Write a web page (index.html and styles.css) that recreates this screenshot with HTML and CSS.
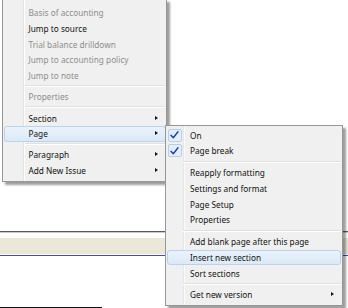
FILE: index.html
```html
<!DOCTYPE html>
<html>
<head>
<meta charset="utf-8">
<link rel="stylesheet" href="styles.css">
</head>
<body>
<div class="doc">
  <div class="rule-dark"></div>
  <div class="band"></div>
  <div class="rule-blue"></div>
  <div class="rule-black"></div>
</div>

<div class="menu main-menu">
  <div class="item disabled">Basis of accounting</div>
  <div class="item">Jump to source</div>
  <div class="item disabled">Trial balance drilldown</div>
  <div class="item disabled">Jump to accounting policy</div>
  <div class="item disabled">Jump to note</div>
  <div class="sep"></div>
  <div class="item disabled">Properties</div>
  <div class="sep"></div>
  <div class="item sub">Section<span class="arrow"></span></div>
  <div class="item sub hot">Page<span class="arrow"></span></div>
  <div class="sep"></div>
  <div class="item sub">Paragraph<span class="arrow"></span></div>
  <div class="item sub">Add New Issue<span class="arrow"></span></div>
</div>

<div class="menu sub-menu">
  <div class="item checked"><span class="check"><svg width="9" height="8" viewBox="0 0 9 8"><path d="M1 4.2 L3.3 6.8 L8 0.8" fill="none" stroke="#1d3fa8" stroke-width="1.4" stroke-linecap="round" stroke-linejoin="round"/></svg></span>On</div>
  <div class="item checked"><span class="check"><svg width="9" height="8" viewBox="0 0 9 8"><path d="M1 4.2 L3.3 6.8 L8 0.8" fill="none" stroke="#1d3fa8" stroke-width="1.4" stroke-linecap="round" stroke-linejoin="round"/></svg></span>Page break</div>
  <div class="sep"></div>
  <div class="item">Reapply formatting</div>
  <div class="item">Settings and format</div>
  <div class="item">Page Setup</div>
  <div class="item">Properties</div>
  <div class="sep"></div>
  <div class="item">Add blank page after this page</div>
  <div class="item hot">Insert new section</div>
  <div class="item">Sort sections</div>
  <div class="sep"></div>
  <div class="item sub">Get new version<span class="arrow"></span></div>
</div>
</body>
</html>
```

FILE: styles.css
```css
html, body {
  margin: 0;
  padding: 0;
  background: #ffffff;
  width: 348px;
  height: 308px;
  overflow: hidden;
}

body {
  position: relative;
  font-family: "Noto Sans", "Open Sans", sans-serif;
  font-size: 8.25px;
  color: #111111;
}

.doc {
  padding-top: 231px;
  display: flex;
  flex-direction: column;
}

.rule-dark {
  height: 1px;
  background: #5a5a5a;
  border-bottom: 1px solid #c8c8c8;
}

.band {
  margin-top: 5px;
  height: 16px;
  background: #ece8d8;
}

.rule-blue {
  margin-top: 1px;
  height: 1px;
  background: #4d4d9e;
}

.rule-black {
  margin-top: 51px;
  width: 102px;
  height: 2px;
  background: #111111;
}

.menu {
  position: absolute;
  box-sizing: border-box;
  background-color: #f0f0f0;
  border: 1px solid #979797;
  box-shadow: 3px 3px 2px rgba(0, 0, 0, 0.38);
}

.main-menu {
  left: 2px;
  top: -1px;
  width: 165px;
  padding: 4.85px 0 2px 0;
  background-image: linear-gradient(to right, transparent 20px, #e2e3e3 20px, #e2e3e3 21px, #ffffff 21px, #ffffff 22px, transparent 22px);
}

.sub-menu {
  left: 165px;
  top: 124.5px;
  width: 178px;
  padding: 1.9px 0 2px 0;
  background-image: linear-gradient(to right, transparent 17px, #e6e6e6 17px, #e6e6e6 18px, #fafafa 18px, #fafafa 19px, transparent 19px);
}

.item {
  position: relative;
  box-sizing: border-box;
  height: 15.7px;
  display: flex;
  align-items: center;
  padding-left: 23.5px;
  margin: 0 1px;
  white-space: nowrap;
  border: 1px solid transparent;
  border-radius: 3px;
}

.main-menu .item {
  margin-right: 0;
}

.sub-menu .item {
  padding-left: 22px;
}

.item.disabled {
  color: #8d8d8d;
}

.item.hot {
  background: linear-gradient(to bottom, #eaf3fc, #dbe9f6);
  border-color: #b9d3ee;
}

.arrow {
  position: absolute;
  right: 7px;
  top: 50%;
  margin-top: -2.5px;
  width: 0;
  height: 0;
  border-top: 2.5px solid transparent;
  border-bottom: 2.5px solid transparent;
  border-left: 3px solid #111111;
}

.sub-menu .arrow {
  right: 6px;
}

.check {
  position: absolute;
  left: -0.3px;
  top: 0.3px;
  box-sizing: border-box;
  width: 14px;
  height: 13px;
  border: 1px solid #b6cfe8;
  border-radius: 2px;
  background: #e4eef9;
  display: flex;
  align-items: center;
  justify-content: center;
}

.sep {
  height: 5.6px;
  margin-left: 22px;
  margin-right: 1px;
  display: flex;
  flex-direction: column;
  justify-content: center;
}

.sep::before {
  content: "";
  display: block;
  height: 1px;
  background: #e0e0e0;
  border-bottom: 1px solid #ffffff;
}

.sub-menu .sep {
  height: 6.2px;
  margin-left: 17px;
}
```
